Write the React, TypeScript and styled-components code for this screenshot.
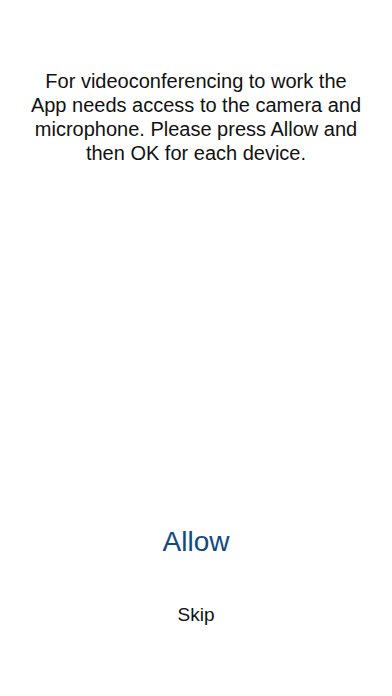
import { styled, createGlobalStyle } from "styled-components";

const GlobalStyle = createGlobalStyle`
    html, body {
        margin: 0;
        padding: 0;
        background: #ffffff;
    }
    body {
        font-family: "Liberation Sans", Arial, sans-serif;
    }
`;

const Page = styled.div`
    height: 696px;
    display: flex;
    flex-direction: column;
    align-items: center;
    background: #ffffff;
    box-sizing: border-box;
    padding: 69px 20px 69px;
`;

const Message = styled.p`
    margin: 0;
    font-size: 20px;
    line-height: 24px;
    color: #111111;
    text-align: center;
    max-width: 340px;
`;

const Spacer = styled.div`
    flex: 1;
`;

const Actions = styled.div`
    display: flex;
    flex-direction: column;
    align-items: center;
    gap: 44px;
`;

const TextButton = styled.button<{ $primary?: boolean }>`
    all: unset;
    cursor: pointer;
    font-family: "Liberation Sans", Arial, sans-serif;
    font-size: ${(props) => (props.$primary ? "28px" : "19px")};
    line-height: ${(props) => (props.$primary ? "34px" : "24px")};
    color: ${(props) => (props.$primary ? "#0f4a80" : "#111111")};
`;

function App() {
    return (
        <>
            <GlobalStyle />
            <Page>
                <Message>
                    For videoconferencing to work the App needs access to the
                    camera and microphone. Please press Allow and then OK for
                    each device.
                </Message>
                <Spacer />
                <Actions>
                    <TextButton type="button" $primary>
                        Allow
                    </TextButton>
                    <TextButton type="button">Skip</TextButton>
                </Actions>
            </Page>
        </>
    );
}

export default App;
